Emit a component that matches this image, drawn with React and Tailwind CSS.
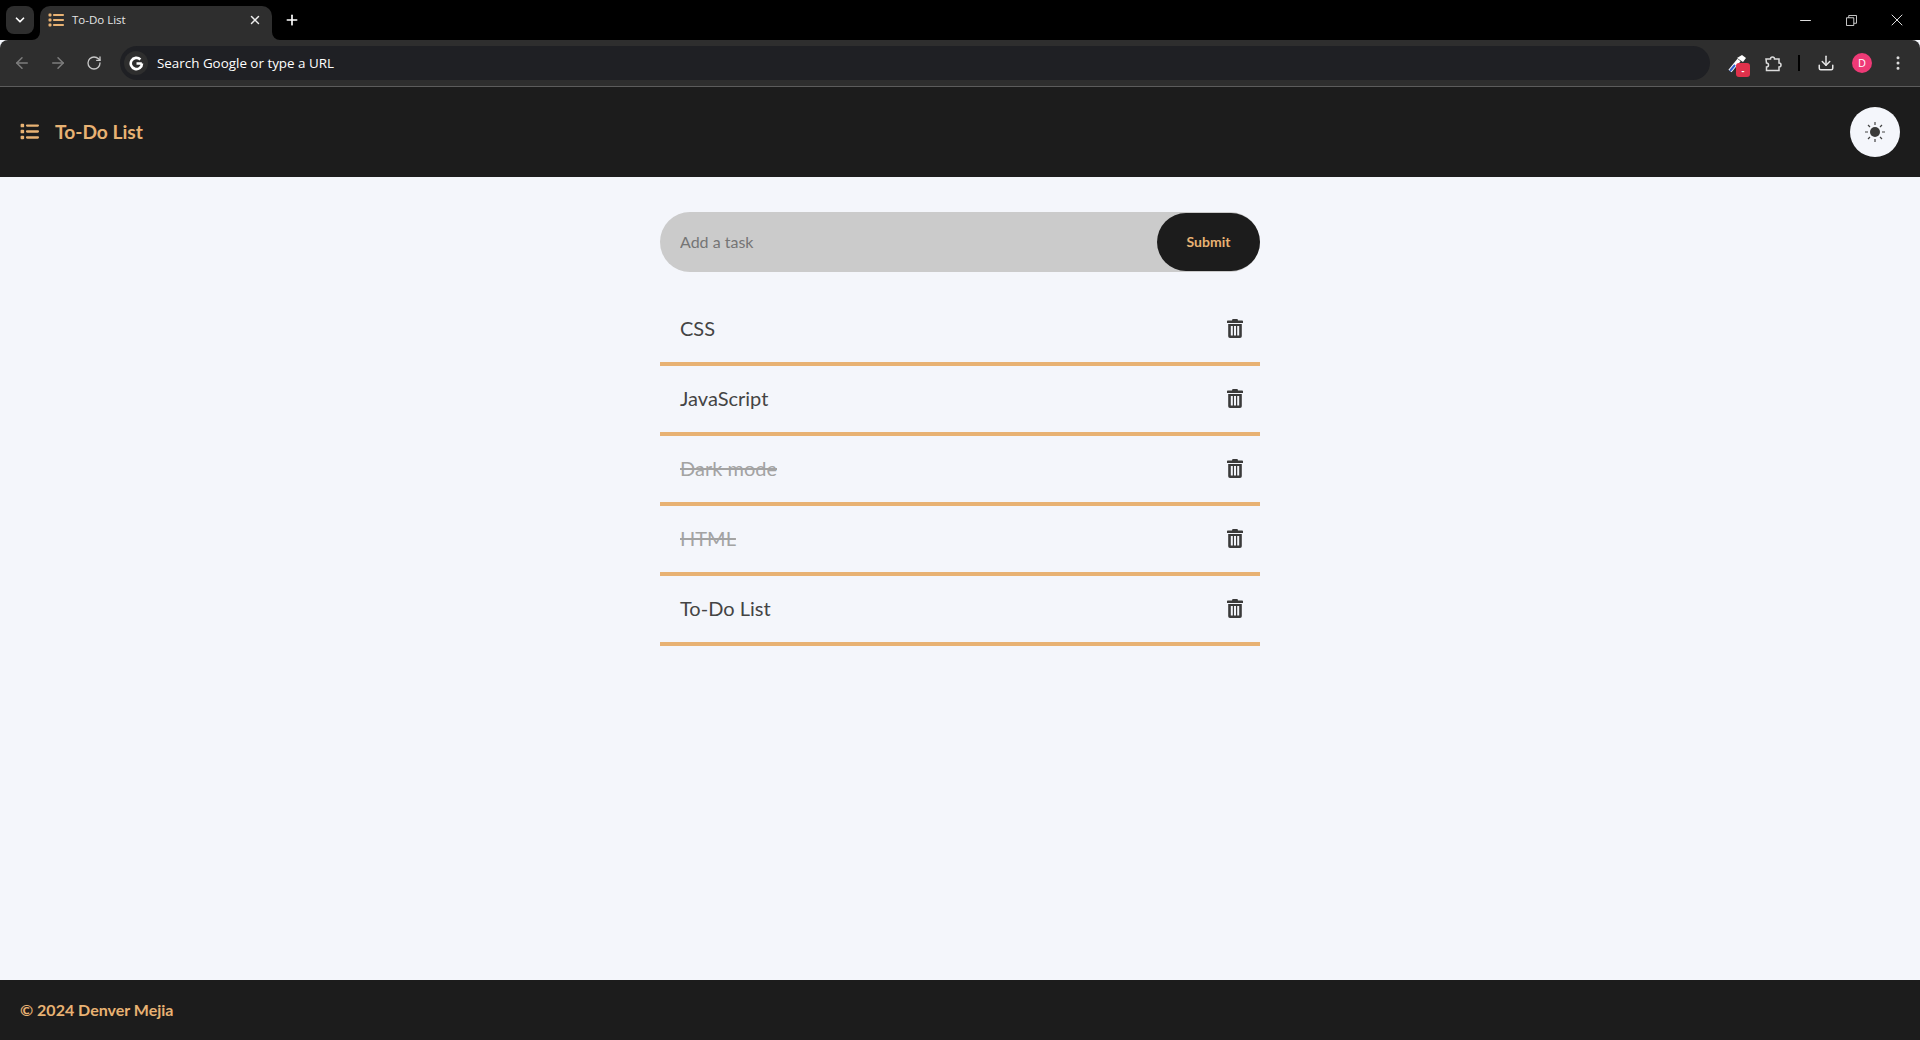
import React from 'react';
import { ArrowLeft, ArrowRight, RotateCw, ChevronDown, X, Plus, Minus, Download, EllipsisVertical } from 'lucide-react';

const tasks = [
  { id: 1, title: 'CSS', done: false },
  { id: 2, title: 'JavaScript', done: false },
  { id: 3, title: 'Dark mode', done: true },
  { id: 4, title: 'HTML', done: true },
  { id: 5, title: 'To-Do List', done: false },
];

const ListIcon = ({ className }) => (
  <svg viewBox="0 0 512 512" fill="currentColor" className={className}>
    <path d="M40 48C26.700 48 16 58.700 16 72v48c0 13.300 10.700 24 24 24h48c13.300 0 24-10.700 24-24V72c0-13.300-10.700-24-24-24H40zM192 64c-17.700 0-32 14.300-32 32s14.300 32 32 32H480c17.700 0 32-14.300 32-32s-14.300-32-32-32H192zm0 160c-17.700 0-32 14.300-32 32s14.300 32 32 32H480c17.700 0 32-14.300 32-32s-14.300-32-32-32H192zm0 160c-17.700 0-32 14.300-32 32s14.300 32 32 32H480c17.700 0 32-14.300 32-32s-14.300-32-32-32H192zM16 232v48c0 13.300 10.700 24 24 24h48c13.300 0 24-10.700 24-24V232c0-13.300-10.700-24-24-24H40c-13.300 0-24 10.700-24 24zM40 368c-13.300 0-24 10.700-24 24v48c0 13.300 10.700 24 24 24h48c13.300 0 24-10.700 24-24V392c0-13.300-10.700-24-24-24H40z" />
  </svg>
);

const TrashIcon = () => (
  <svg viewBox="0 0 16 19" fill="#3a3a3a" className="h-[19px] w-4">
    <path d="M5.500 0h5l.5 1.500h4.200a.8.800 0 0 1 .8.800V4H0V2.300a.8.800 0 0 1 .8-.8H5z" />
    <path fillRule="evenodd" d="M1.200 5h13.600v12.200a1.800 1.800 0 0 1-1.800 1.800H3a1.800 1.800 0 0 1-1.800-1.800zM3.800 7v9.500h2V7zM7 7v9.500h2V7zM10.200 7v9.500h2V7z" />
  </svg>
);

const SunIcon = () => (
  <svg viewBox="0 0 20 20" className="h-5 w-5" stroke="#444" strokeWidth="1.200" fill="none">
    <circle cx="10" cy="10" r="5" fill="#3a3a3a" stroke="none" />
    <path d="M10 0v3M10 17v3M0 10h3M17 10h3M3 3l2 2M15 15l2 2M3 17l2-2M15 5l2-2" />
  </svg>
);

const GoogleG = () => (
  <svg viewBox="0 0 24 24" className="h-[15px] w-[15px]" fill="none" stroke="#fff" strokeWidth="4.200">
    <path d="M20.500 12h-8.500M20.800 12a9 9 0 1 1-2.600-6.400" />
  </svg>
);

const ExtensionIcon = () => (
  <svg viewBox="0 0 18 18" fill="none" stroke="#dcdcdc" strokeWidth="1.500" className="ml-[14px] h-[18px] w-[18px]">
    <path d="M2 5h4.500a2 2 0 0 1 4 0H15v4a2 2 0 0 1 0 4v3.500H2.500V13a2 2 0 0 0 0-4z" />
  </svg>
);

const App = () => {
  return (
    <div className="flex h-[1040px] flex-col bg-[#f4f6fb] font-['Lato',sans-serif]">
      {/* ===== TAB STRIP ===== */}
      <div className="flex h-10 items-center bg-black pl-[6px] font-['Open_Sans',sans-serif]">
        <div className="flex h-7 w-7 items-center justify-center rounded-lg bg-[#2e2e2e]">
          <ChevronDown size={14} color="#fff" strokeWidth={3} />
        </div>
        <div className="relative ml-[6px] flex h-[34px] w-[232px] items-center self-end rounded-t-[10px] bg-[#2e2e2e] pb-[6px] pl-2 pr-[10px]">
          <svg viewBox="0 0 8 8" className="absolute bottom-0 left-[-8px] h-2 w-2" fill="#2e2e2e">
            <path d="M8 0v8H0a8 8 0 0 0 8-8z" />
          </svg>
          <ListIcon className="h-4 w-4 text-[#e8b273]" />
          <span className="ml-2 flex-1 text-[11.5px] text-[#e6e6e6]">To-Do List</span>
          <X size={14} color="#eee" strokeWidth={2.500} />
          <svg viewBox="0 0 8 8" className="absolute bottom-0 right-[-8px] h-2 w-2" fill="#2e2e2e">
            <path d="M0 0v8h8a8 8 0 0 1-8-8z" />
          </svg>
        </div>
        <Plus size={16} color="#fff" strokeWidth={2.500} className="ml-[12px]" />
        <div className="ml-auto flex items-center pr-[13px]">
          <Minus size={17} color="#ddd" strokeWidth={1.500} className="mr-[32px]" />
          <svg viewBox="0 0 12 12" className="mr-[30px] h-[11px] w-[11px]" fill="none" stroke="#ddd">
            <path d="M.5 3h8v8.500h-8zM3 3V.5h8.500V9H8.500" />
          </svg>
          <X size={20} color="#ddd" strokeWidth={1.200} />
        </div>
      </div>

      {/* ===== TOOLBAR ===== */}
      <div className="flex h-[47px] items-center rounded-t-lg border-b border-[#5c5c5c] bg-[#2e2e2e] pl-[13px] pr-[13px] font-['Open_Sans',sans-serif]">
        <ArrowLeft size={18} color="#7d7d7d" />
        <ArrowRight size={18} color="#7d7d7d" className="ml-[18px]" />
        <RotateCw size={16} color="#c7c7c7" className="ml-[19px]" />
        <div className="ml-[18px] flex h-[34px] flex-1 items-center rounded-full bg-[#1f2024] pl-1">
          <div className="flex h-6 w-6 items-center justify-center rounded-full bg-[#2e2e2e]">
            <GoogleG />
          </div>
          <span className="ml-[9px] text-[13.4px] text-white">Search Google or type a URL</span>
        </div>
        <div className="relative ml-[18px] h-5 w-[22px]">
          <svg viewBox="0 0 20 20" className="h-5 w-5" fill="none">
            <path d="M2 18 11 7" stroke="#fff" strokeWidth="4" />
            <path d="M2 18 7 12" stroke="#2f5fd0" strokeWidth="2" />
            <path d="M9 5l5-3 4 3-3 4z" fill="#fff" />
          </svg>
          <span className="absolute left-[8px] top-[10px] flex h-[14px] w-[14px] items-center justify-center rounded-[3px] bg-[#e0314b] text-[9px] font-bold leading-none text-white">-</span>
        </div>
        <ExtensionIcon />
        <div className="ml-4 h-4 w-[2px] bg-black" />
        <Download size={18} color="#e6e6e6" className="ml-[17px]" />
        <div className="ml-[17px] flex h-5 w-5 items-center justify-center rounded-full bg-[#ee3a76] text-[11px] text-white">D</div>
        <EllipsisVertical size={18} color="#dcdcdc" className="ml-[17px]" />
      </div>

      {/* ===== HEADER ===== */}
      <header className="flex h-[90px] items-center justify-between bg-[#1c1c1c] pl-5 pr-5">
        <div className="flex items-center">
          <ListIcon className="h-[19px] w-[19px] text-[#e8b273]" />
          <h1 className="ml-4 text-[19.2px] font-bold text-[#e8b273]">To-Do List</h1>
        </div>
        <button type="button" className="flex h-[50px] w-[50px] items-center justify-center rounded-full bg-[#f4f6fb]">
          <SunIcon />
        </button>
      </header>

      {/* ===== MAIN ===== */}
      <main className="flex-1">
        <div className="mx-auto w-[600px] pt-[35px]">
          <form className="flex h-[60px] items-center rounded-full bg-[#cbcbcb]">
            <input
              placeholder="Add a task"
              className="h-full min-w-0 flex-1 bg-transparent pb-[2px] pl-5 text-base text-[#333] outline-none placeholder:text-[#757575]"
            />
            <button type="button" className="h-[58px] w-[103px] rounded-full bg-[#1c1c1c] text-sm font-bold text-[#e8b273]">
              Submit
            </button>
          </form>

          <ul className="mt-6">
            {tasks.map((t) => (
              <li key={t.id} className="flex h-[70px] items-center justify-between border-b-4 border-[#e8b273] pb-[2px] pl-5 pr-[17px]">
                <span className={`text-xl ${t.done ? 'text-[#a3a3a3] line-through' : 'text-[#444]'}`}>{t.title}</span>
                <TrashIcon />
              </li>
            ))}
          </ul>
        </div>
      </main>

      {/* ===== FOOTER ===== */}
      <footer className="flex h-[60px] items-center bg-[#1c1c1c] pl-5 text-base font-bold text-[#e8b273]">
        © 2024 Denver Mejia
      </footer>
    </div>
  );
};

export default App;
